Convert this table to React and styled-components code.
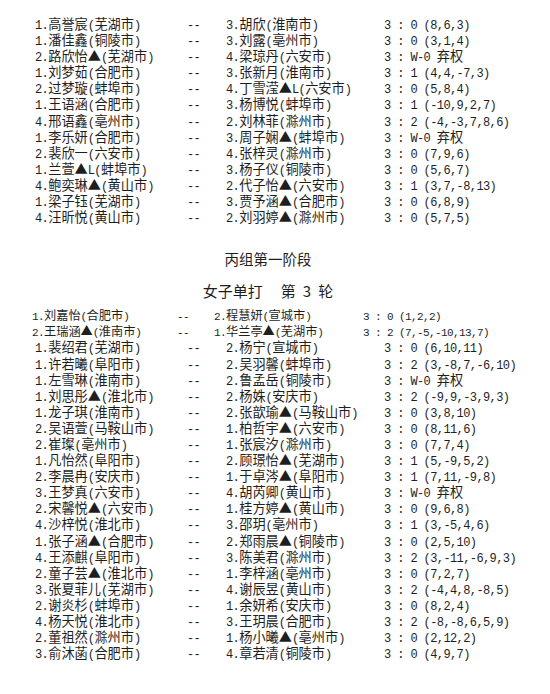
import styled, { createGlobalStyle } from 'styled-components';

const GlobalStyle = createGlobalStyle`
  html, body {
    margin: 0;
    padding: 0;
    background: #fff;
  }
  body {
    font-family: "Noto Sans CJK SC", sans-serif;
    color: #1e1e1e;
  }
`;

const groupA = [
  ['1. 高誉宸(芜湖市)', '3. 胡欣(淮南市)', '3 : 0 (8,6,3)'],
  ['1. 潘佳鑫(铜陵市)', '3. 刘露(亳州市)', '3 : 0 (3,1,4)'],
  ['2. 路欣怡▲(芜湖市)', '4. 梁琼丹(六安市)', '3 : W-0 弃权'],
  ['1. 刘梦茹(合肥市)', '3. 张新月(淮南市)', '3 : 1 (4,4,-7,3)'],
  ['2. 过梦璇(蚌埠市)', '4. 丁雪滢▲L(六安市)', '3 : 0 (5,8,4)'],
  ['1. 王语涵(合肥市)', '3. 杨博悦(蚌埠市)', '3 : 1 (-10,9,2,7)'],
  ['4. 邢语鑫(亳州市)', '2. 刘林菲(滁州市)', '3 : 2 (-4,-3,7,8,6)'],
  ['1. 李乐妍(合肥市)', '3. 周子娴▲(蚌埠市)', '3 : W-0 弃权'],
  ['2. 裴欣一(六安市)', '4. 张梓灵(滁州市)', '3 : 0 (7,9,6)'],
  ['1. 兰萱▲L(蚌埠市)', '3. 杨子仪(铜陵市)', '3 : 0 (5,6,7)'],
  ['4. 鲍奕琳▲(黄山市)', '2. 代子怡▲(六安市)', '3 : 1 (3,7,-8,13)'],
  ['1. 梁子钰(芜湖市)', '3. 贾予涵▲(合肥市)', '3 : 0 (6,8,9)'],
  ['4. 汪昕悦(黄山市)', '2. 刘羽婷▲(滁州市)', '3 : 0 (5,7,5)'],
];

const groupB = [
  ['1. 刘嘉怡(合肥市)', '2. 程慧妍(宣城市)', '3 : 0 (1,2,2)', true],
  ['2. 王瑞涵▲(淮南市)', '1. 华兰亭▲(芜湖市)', '3 : 2 (7,-5,-10,13,7)', true],
  ['1. 裴绍君(芜湖市)', '2. 杨宁(宣城市)', '3 : 0 (6,10,11)'],
  ['1. 许若曦(阜阳市)', '2. 吴羽馨(蚌埠市)', '3 : 2 (3,-8,7,-6,10)'],
  ['1. 左雪琳(淮南市)', '2. 鲁孟岳(铜陵市)', '3 : W-0 弃权'],
  ['1. 刘思彤▲(淮北市)', '2. 杨姝(安庆市)', '3 : 2 (-9,9,-3,9,3)'],
  ['1. 龙子琪(淮南市)', '2. 张歆瑜▲(马鞍山市)', '3 : 0 (3,8,10)'],
  ['2. 吴语萱(马鞍山市)', '1. 柏哲宇▲(六安市)', '3 : 0 (8,11,6)'],
  ['2. 崔璨(亳州市)', '1. 张宸汐(滁州市)', '3 : 0 (7,7,4)'],
  ['1. 凡怡然(阜阳市)', '2. 顾璟怡▲(芜湖市)', '3 : 1 (5,-9,5,2)'],
  ['2. 李晨冉(安庆市)', '1. 于卓涔▲(阜阳市)', '3 : 1 (7,11,-9,8)'],
  ['3. 王梦真(六安市)', '4. 胡芮卿(黄山市)', '3 : W-0 弃权'],
  ['2. 宋馨悦▲(六安市)', '1. 桂方婷▲(黄山市)', '3 : 0 (9,6,8)'],
  ['4. 沙梓悦(淮北市)', '3. 邵玥(亳州市)', '3 : 1 (3,-5,4,6)'],
  ['1. 张子涵▲(合肥市)', '2. 郑雨晨▲(铜陵市)', '3 : 0 (2,5,10)'],
  ['4. 王添麒(阜阳市)', '3. 陈美君(滁州市)', '3 : 2 (3,-11,-6,9,3)'],
  ['2. 童子芸▲(淮北市)', '1. 李梓涵(亳州市)', '3 : 0 (7,2,7)'],
  ['3. 张夏菲儿(芜湖市)', '4. 谢辰昱(黄山市)', '3 : 2 (-4,4,8,-8,5)'],
  ['2. 谢炎杉(蚌埠市)', '1. 余妍希(安庆市)', '3 : 0 (8,2,4)'],
  ['4. 杨天悦(淮北市)', '3. 王玥晨(合肥市)', '3 : 2 (-8,-8,6,5,9)'],
  ['2. 董祖然(滁州市)', '1. 杨小曦▲(亳州市)', '3 : 0 (2,12,2)'],
  ['3. 俞沐菡(合肥市)', '4. 章若清(铜陵市)', '3 : 0 (4,9,7)'],
];

// split into han / latin runs so latin text gets the half-width mono face
function Mixed({ text, compact }) {
  const parts = text.replace('. ', '.').split(/([\u4e00-\u9fff▲]+)/);
  return parts.map((p, i) =>
    i % 2 === 1 ? (
      <span key={i}>{p}</span>
    ) : p ? (
      <Latin key={i} $compact={compact}>
        {p}
      </Latin>
    ) : null
  );
}

function MatchRow({ left, right, score, compact }) {
  return (
    <Row $compact={compact}>
      <Cell>
        <Mixed text={left} compact={compact} />
      </Cell>
      <Cell>
        <Latin $compact={compact}>--</Latin>
      </Cell>
      <Cell>
        <Mixed text={right} compact={compact} />
      </Cell>
      <Cell>
        <Mixed text={score} compact={compact} />
      </Cell>
    </Row>
  );
}

function App() {
  return (
    <>
      <GlobalStyle />
      <Sheet>
        <Block>
          {groupA.map(([l, r, s]) => (
            <MatchRow key={l} left={l} right={r} score={s} />
          ))}
        </Block>
        <Heading>丙组第一阶段</Heading>
        <SubHeading>
          <span>女子单打</span>
          <Gap $w={18} />
          <span>第</span>
          <Gap $w={7} />
          <span>3</span>
          <Gap $w={7} />
          <span>轮</span>
        </SubHeading>
        <Block $top={7}>
          {groupB.map(([l, r, s, c]) => (
            <MatchRow key={l} left={l} right={r} score={s} compact={c} />
          ))}
        </Block>
      </Sheet>
    </>
  );
}

const Sheet = styled.div`
  padding-top: 16px;
  width: 550px;
  min-height: 694px;
  box-sizing: border-box;
`;

const Block = styled.div`
  display: flex;
  flex-direction: column;
  margin-top: ${(props) => props.$top || 0}px;
`;

const Row = styled.div`
  display: grid;
  grid-template-columns: ${(props) =>
    props.$compact ? '145px 37px 149px 1fr' : '152px 39px 158px 1fr'};
  padding-left: ${(props) => (props.$compact ? 32 : 35)}px;
  height: ${(props) => (props.$compact ? 15.6 : 16.1)}px;
  line-height: ${(props) => (props.$compact ? 15.6 : 16.1)}px;
  font-size: ${(props) => (props.$compact ? 12.2 : 13.2)}px;
  white-space: pre;
`;

const Cell = styled.div`
  overflow: visible;
`;

const Latin = styled.span`
  font-family: "Liberation Mono", monospace;
  font-size: ${(props) => (props.$compact ? 11 : 12)}px;
  letter-spacing: -0.6px;
`;

const Heading = styled.div`
  margin-top: 24px;
  padding-right: 14px;
  text-align: center;
  font-size: 14.5px;
  line-height: 20px;
  height: 20px;
`;

const SubHeading = styled(Heading)`
  display: flex;
  justify-content: center;
  align-items: baseline;
  margin-top: 12px;
  font-size: 15px;
`;

const Gap = styled.span`
  display: inline-block;
  width: ${(props) => props.$w}px;
`;

export default App;
